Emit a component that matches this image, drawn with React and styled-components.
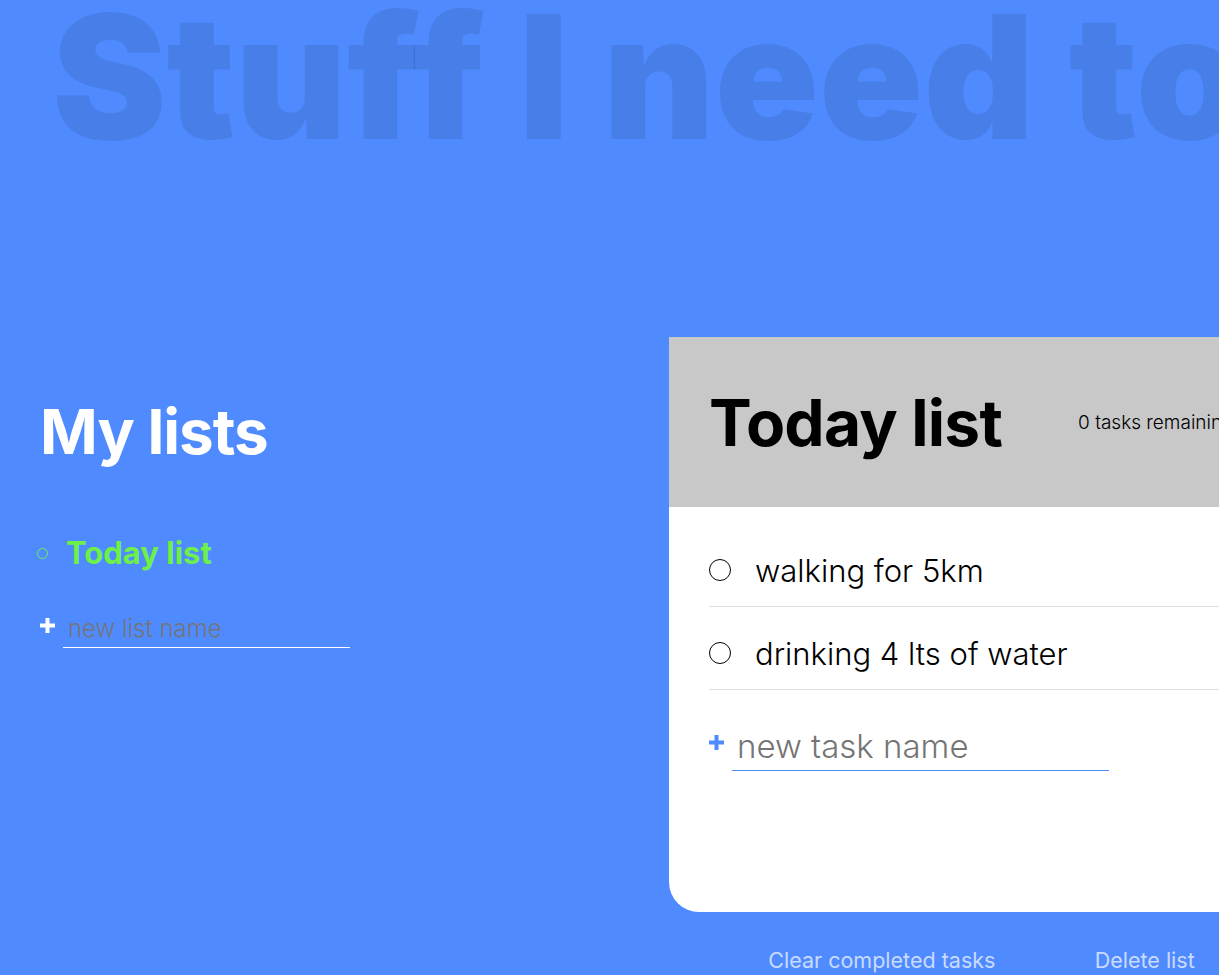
import React from "react";
import styled, { createGlobalStyle } from "styled-components";

const GlobalStyle = createGlobalStyle`
  *, *::before, *::after {
    box-sizing: border-box;
  }
  body {
    margin: 0;
    background: #4f8bff;
    font-family: "Inter", "Noto Sans", sans-serif;
    overflow: hidden;
  }
`;

const lists = [{ id: 1, name: "Today list" }];
const tasks = [
  { id: 1, name: "walking for 5km" },
  { id: 2, name: "drinking 4 lts of water" },
];

const PlusIcon = ({ color }) => (
  <svg width="15" height="15" viewBox="0 0 15 15">
    <rect x="5.5" y="0" width="4" height="15" fill={color} />
    <rect x="0" y="5.5" width="15" height="4" fill={color} />
  </svg>
);

const App = () => {
  return (
    <Page>
      <GlobalStyle />
      <Title>Stuff I need to do</Title>
      <Main>
        <Sidebar>
          <ListsTitle>My lists</ListsTitle>
          <Lists>
            {lists.map((list) => (
              <ListItem key={list.id}>
                <Bullet />
                {list.name}
              </ListItem>
            ))}
          </Lists>
          <NewForm>
            <PlusIcon color="#ffffff" />
            <NewInput type="text" placeholder="new list name" $line="#ffffff" $width="287px" $size="24px" />
          </NewForm>
        </Sidebar>

        <Column>
          <Card>
            <CardHeader>
              <CardTitle>Today list</CardTitle>
              <Count>0 tasks remaining</Count>
            </CardHeader>
            <CardBody>
              {tasks.map((task) => (
                <Task key={task.id}>
                  <Check />
                  <TaskName>{task.name}</TaskName>
                </Task>
              ))}
              <NewForm $task>
                <PlusIcon color="#4f8bff" />
                <NewInput type="text" placeholder="new task name" $line="#4f8bff" $width="377px" $size="33px" />
              </NewForm>
            </CardBody>
          </Card>
          <Actions>
            <ActionButton>Clear completed tasks</ActionButton>
            <ActionButton>Delete list</ActionButton>
          </Actions>
        </Column>
      </Main>
    </Page>
  );
};

//styled components
const Page = styled.div`
  min-height: 100vh;
  overflow: hidden;
`;
const Title = styled.h1`
  margin: -10px 0 0 52px;
  font-size: 172px;
  font-weight: 900;
  line-height: 1;
  white-space: nowrap;
  color: rgba(0, 0, 0, 0.09);
`;
const Main = styled.div`
  display: flex;
  align-items: flex-start;
  padding: 175px 0 0 40px;
`;
const Sidebar = styled.div`
  flex: 0 0 629px;
  padding-top: 58px;
  color: #ffffff;
`;
const ListsTitle = styled.h2`
  margin: 0;
  font-size: 62px;
  font-weight: 700;
  line-height: 1.2;
  letter-spacing: -1px;
`;
const Lists = styled.ul`
  list-style: none;
  margin: 65px 0 0 -3px;
  padding: 0;
`;
const ListItem = styled.li`
  display: flex;
  align-items: center;
  gap: 18px;
  font-size: 31px;
  font-weight: 700;
  color: #6df049;
`;
const Bullet = styled.span`
  flex: none;
  width: 11px;
  height: 11px;
  margin-top: 2px;
  border: 1px solid #6df049;
  border-radius: 50%;
`;
const NewForm = styled.form`
  display: flex;
  align-items: center;
  gap: 8px;
  margin-top: ${(p) => (p.$task ? "36px" : "43px")};
  svg {
    flex: none;
    margin-top: ${(p) => (p.$task ? "-13px" : "-12px")};
  }
`;
const NewInput = styled.input`
  width: ${(p) => p.$width};
  padding: 0 0 4px 5px;
  border: none;
  border-bottom: 1px solid ${(p) => p.$line};
  background: transparent;
  font-family: inherit;
  font-size: ${(p) => p.$size};
  font-weight: 300;
  outline: none;
  &::placeholder {
    color: #757575;
  }
`;
const Column = styled.div`
  flex: 0 0 625px;
`;
const Card = styled.div`
  background: #ffffff;
  border-bottom-left-radius: 30px;
  overflow: hidden;
  height: 575px;
`;
const CardHeader = styled.div`
  display: flex;
  align-items: center;
  gap: 76px;
  height: 170px;
  padding: 0 40px;
  background: #c8c8c8;
`;
const CardTitle = styled.h2`
  margin: 0;
  font-size: 64px;
  font-weight: 700;
  letter-spacing: -0.8px;
  color: #000000;
  white-space: nowrap;
`;
const Count = styled.p`
  margin: 0;
  font-size: 19px;
  font-weight: 300;
  white-space: nowrap;
`;
const CardBody = styled.div`
  padding: 17px 0 0 40px;
`;
const Task = styled.div`
  display: flex;
  align-items: center;
  gap: 24px;
  height: 83px;
  padding-top: 10px;
  border-bottom: 1px solid #e0e0e0;
`;
const Check = styled.span`
  flex: none;
  width: 22px;
  height: 22px;
  border: 1.5px solid #000000;
  border-radius: 50%;
`;
const TaskName = styled.span`
  font-size: 31px;
  font-weight: 300;
`;
const Actions = styled.div`
  display: flex;
  justify-content: space-evenly;
  padding-top: 35px;
`;
const ActionButton = styled.button`
  border: none;
  padding: 0;
  background: none;
  font-family: inherit;
  font-size: 21.5px;
  font-weight: 400;
  color: rgba(255, 255, 255, 0.7);
`;

export default App;
